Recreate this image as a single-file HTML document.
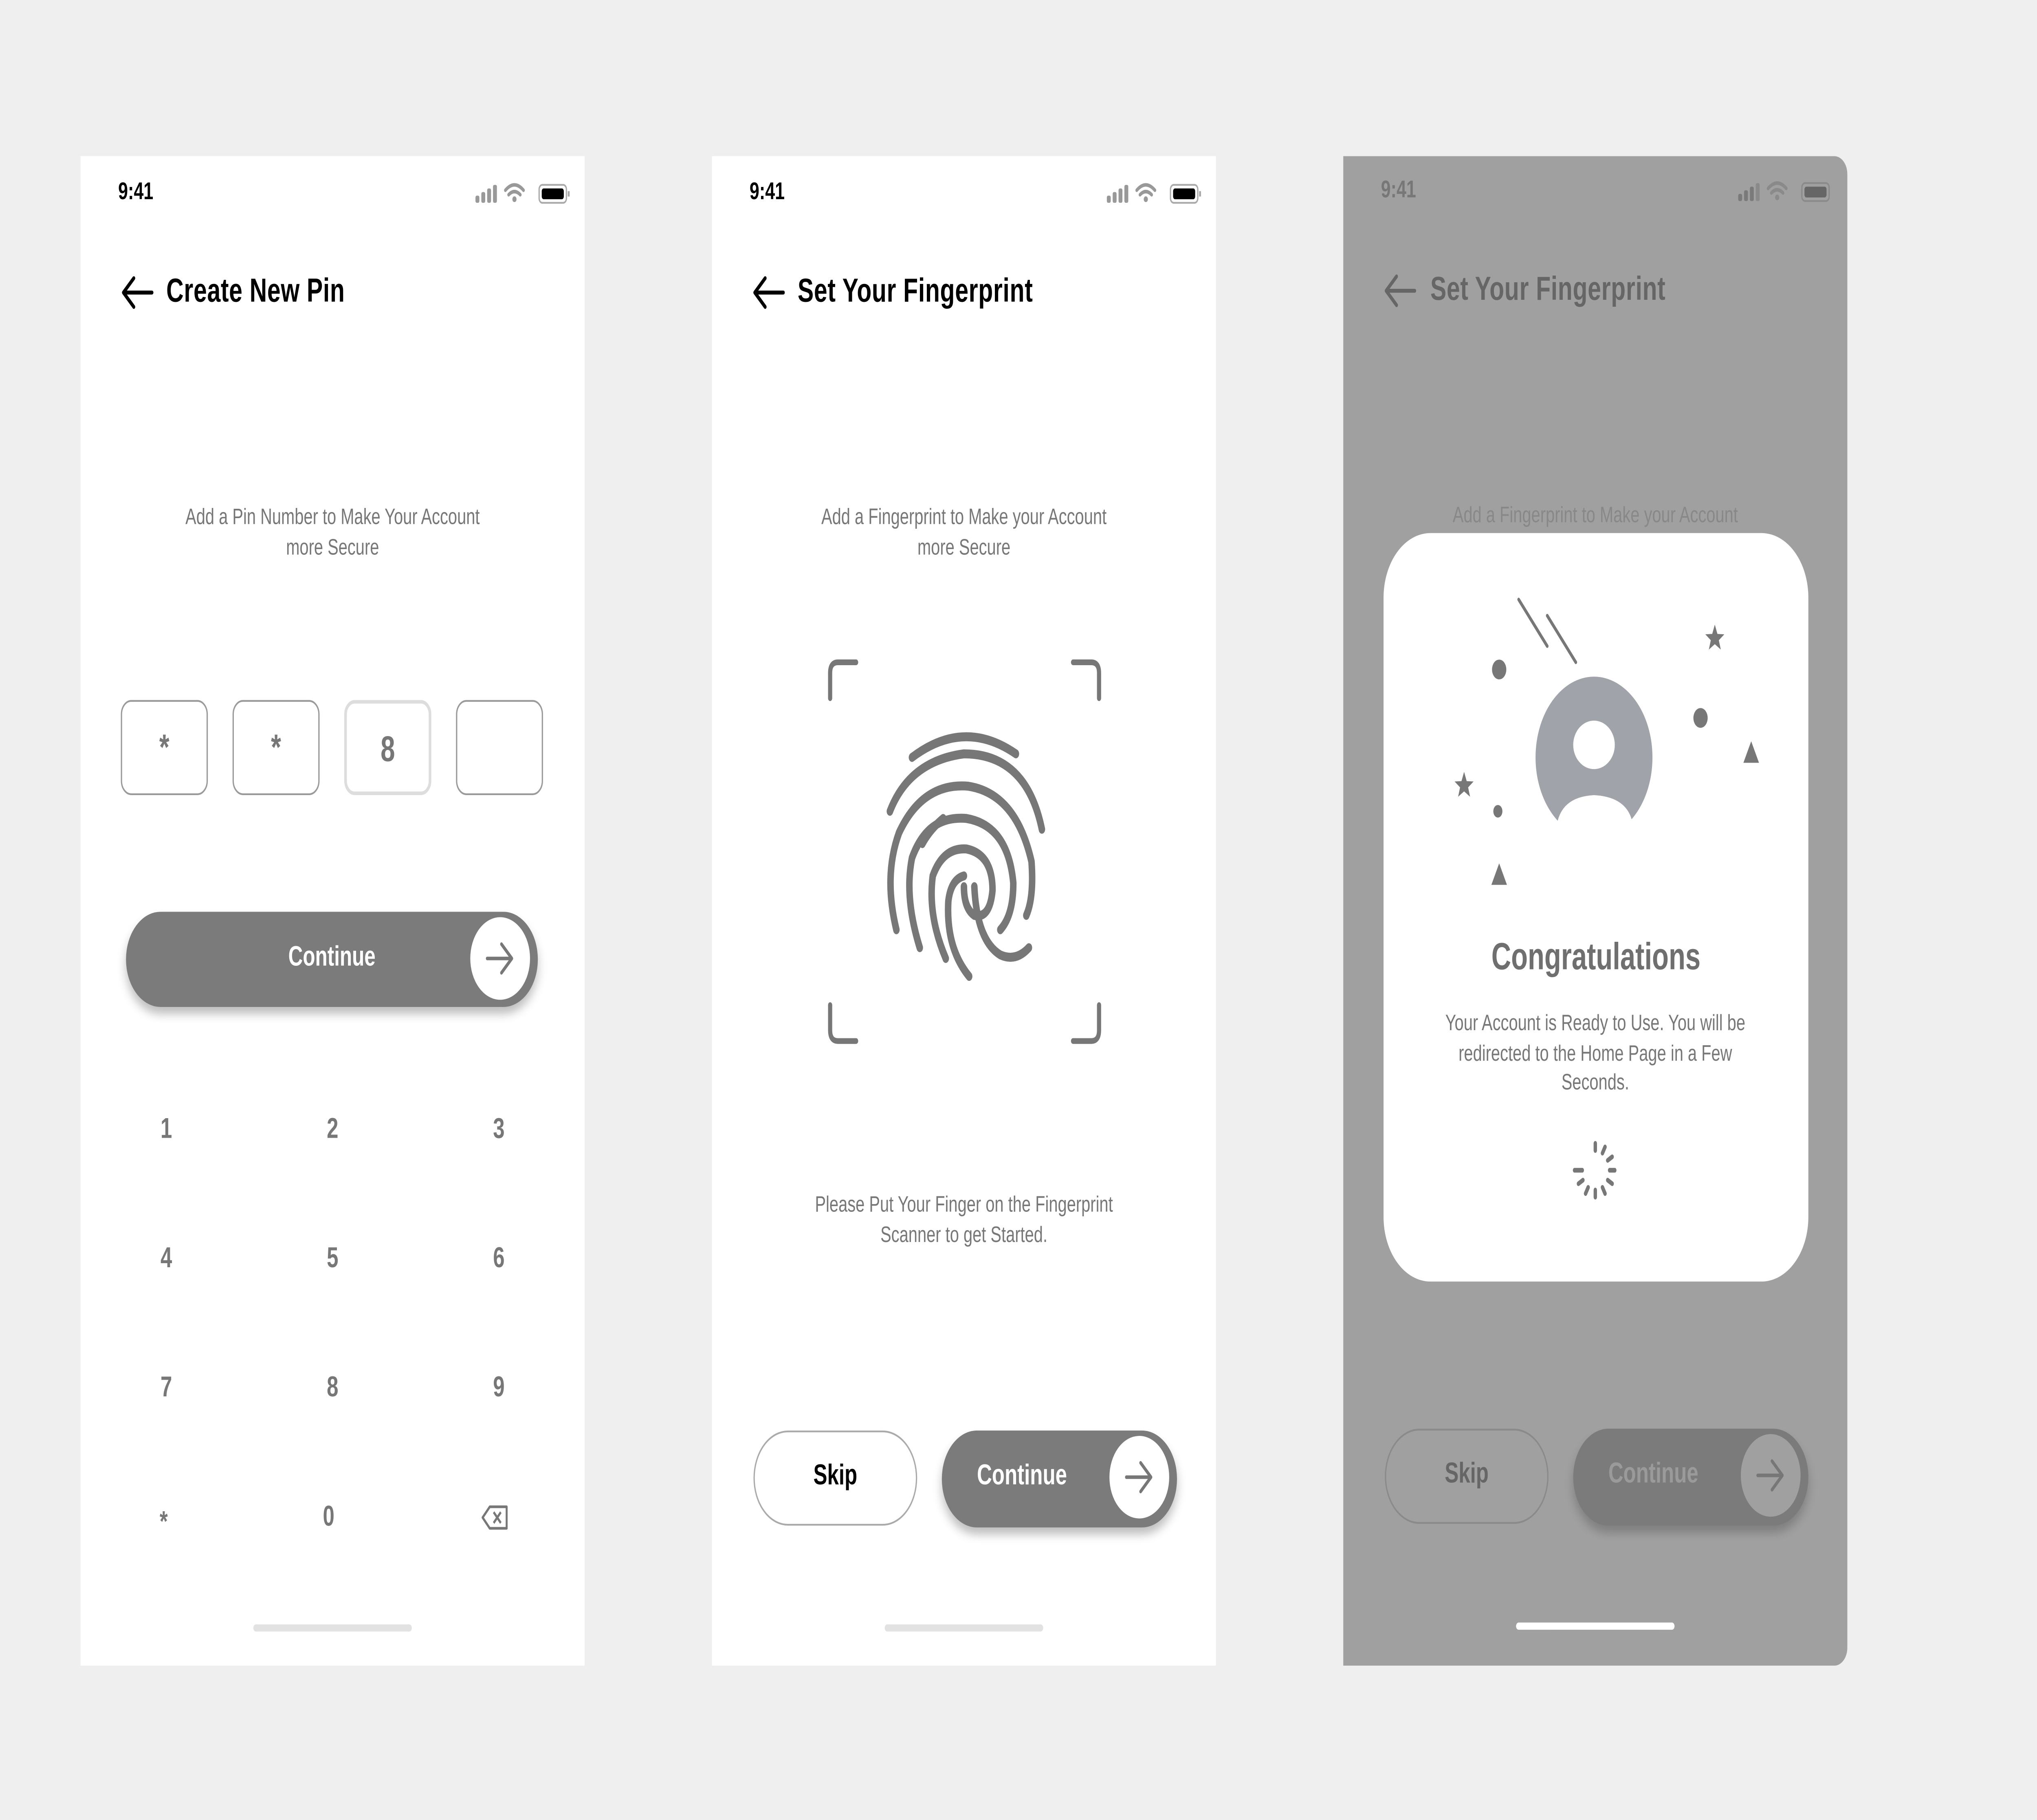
<!DOCTYPE html>
<html><head><meta charset="utf-8">
<style>
html,body{margin:0;padding:0;background:#efefef;overflow:hidden;width:100%;height:100%}
#wrap{position:fixed;left:0;top:0;width:100vw;height:100vh;display:block}
#s{position:relative;width:1568px;height:1014px;font-family:"Liberation Sans",sans-serif;background:#efefef;overflow:hidden}
.ph{position:absolute;top:87px;width:388px;height:841px;background:#fff;overflow:hidden}
.a{position:absolute}
.t{position:absolute;white-space:nowrap}
.time{font-size:13.5px;font-weight:bold;top:99px}
.title{font-size:18.5px;font-weight:bold;top:151px;letter-spacing:.2px}
.sub{font-size:12.5px;color:#777;text-align:center;line-height:16.5px;width:300px}
.box{position:absolute;width:65px;height:51px;border:1.3px solid #9a9a9a;border-radius:8px;top:390px;text-align:center;font-size:20px;font-weight:bold;color:#777;line-height:53px;background:#fff}
.key{position:absolute;font-size:16px;font-weight:bold;color:#777;width:40px;text-align:center;margin-left:-20px}
.home{position:absolute;top:905px;width:122px;height:4px;border-radius:2px;background:#e2e2e2}
</style></head><body>
<svg id="wrap" viewBox="0 0 1568 1014" preserveAspectRatio="none" xmlns="http://www.w3.org/2000/svg">
<foreignObject x="0" y="0" width="1568" height="1014">
<div xmlns="http://www.w3.org/1999/xhtml" id="s">

<!-- PHONE 1 -->
<div class="ph" style="left:62px"></div>
<div class="t time" style="left:91px">9:41</div>
<svg class="a" style="left:364px;top:100px" width="76" height="16" viewBox="0 0 76 16">
<rect x="2" y="9" width="3" height="4" rx="1" fill="#999"/><rect x="6.5" y="7" width="3" height="6" rx="1" fill="#999"/><rect x="11" y="5" width="3" height="8" rx="1" fill="#999"/><rect x="15.5" y="3" width="3" height="10" rx="1" fill="#999"/>
<path d="M25 6 Q32 0 39 6 M27.5 8.5 Q32 5 36.5 8.5" stroke="#999" stroke-width="2" fill="none" stroke-linecap="round"/><circle cx="32" cy="11" r="1.6" fill="#999"/>
<rect x="51" y="3" width="21" height="10" rx="2.5" fill="none" stroke="#aaa" stroke-width="1"/><rect x="53" y="5" width="17" height="6" rx="1.5" fill="#000"/><rect x="73" y="6.5" width="1.5" height="3" fill="#aaa"/></svg>
<svg class="a" style="left:92px;top:153px" width="28" height="20" viewBox="0 0 28 20"><path d="M25 10H3 M11 2L3 10L11 18" stroke="#000" stroke-width="2.2" fill="none" stroke-linecap="round" stroke-linejoin="round"/></svg>
<div class="t title" style="left:128px">Create New Pin</div>
<div class="t sub" style="left:106px;top:280px">Add a Pin Number to Make Your Account<br/>more Secure</div>
<div class="box" style="left:93px">*</div>
<div class="box" style="left:179px">*</div>
<div class="box" style="left:265px;border-color:#ddd;border-width:2px;width:63px;height:49px">8</div>
<div class="box" style="left:351px"></div>
<div class="a" style="left:97px;top:508px;width:317px;height:53px;border-radius:27px;background:#7b7b7b;box-shadow:0 4px 6px rgba(0,0,0,.25)"></div>
<div class="t" style="left:97px;width:317px;text-align:center;top:525px;color:#fff;font-size:15.5px;font-weight:bold">Continue</div>
<div class="a" style="left:362px;top:511px;width:46px;height:46px;border-radius:50%;background:#fff"></div>
<svg class="a" style="left:373px;top:524px" width="24" height="20" viewBox="0 0 24 20"><path d="M2 10H21 M13 2L21 10L13 18" stroke="#777" stroke-width="2" fill="none" stroke-linecap="round" stroke-linejoin="round"/></svg>
<div class="key" style="left:128px;top:621px">1</div><div class="key" style="left:256px;top:621px">2</div><div class="key" style="left:384px;top:621px">3</div>
<div class="key" style="left:128px;top:693px">4</div><div class="key" style="left:256px;top:693px">5</div><div class="key" style="left:384px;top:693px">6</div>
<div class="key" style="left:128px;top:765px">7</div><div class="key" style="left:256px;top:765px">8</div><div class="key" style="left:384px;top:765px">9</div>
<div class="key" style="left:126px;top:840px">*</div><div class="key" style="left:253px;top:837px">0</div>
<svg class="a" style="left:370px;top:838px" width="22" height="15" viewBox="0 0 22 15"><path d="M7 1.5H20V13.5H7L1.5 7.5Z" stroke="#777" stroke-width="1.5" fill="none" stroke-linejoin="round"/><path d="M10 4.5L15.5 10.5M15.5 4.5L10 10.5" stroke="#777" stroke-width="1.5"/></svg>
<div class="home" style="left:195px"></div>

<!-- PHONE 2 -->
<div class="ph" style="left:548px"></div>
<div class="t time" style="left:577px">9:41</div>
<svg class="a" style="left:850px;top:100px" width="76" height="16" viewBox="0 0 76 16">
<rect x="2" y="9" width="3" height="4" rx="1" fill="#999"/><rect x="6.5" y="7" width="3" height="6" rx="1" fill="#999"/><rect x="11" y="5" width="3" height="8" rx="1" fill="#999"/><rect x="15.5" y="3" width="3" height="10" rx="1" fill="#999"/>
<path d="M25 6 Q32 0 39 6 M27.5 8.5 Q32 5 36.5 8.5" stroke="#999" stroke-width="2" fill="none" stroke-linecap="round"/><circle cx="32" cy="11" r="1.6" fill="#999"/>
<rect x="51" y="3" width="21" height="10" rx="2.5" fill="none" stroke="#aaa" stroke-width="1"/><rect x="53" y="5" width="17" height="6" rx="1.5" fill="#000"/><rect x="73" y="6.5" width="1.5" height="3" fill="#aaa"/></svg>
<svg class="a" style="left:578px;top:153px" width="28" height="20" viewBox="0 0 28 20"><path d="M25 10H3 M11 2L3 10L11 18" stroke="#000" stroke-width="2.2" fill="none" stroke-linecap="round" stroke-linejoin="round"/></svg>
<div class="t title" style="left:614px">Set Your Fingerprint</div>
<div class="t sub" style="left:592px;top:280px">Add a Fingerprint to Make your Account<br/>more Secure</div>
<svg class="a" style="left:630px;top:360px" width="225" height="230" viewBox="0 0 225 230">
<g stroke="#777" stroke-width="3.2" fill="none" stroke-linecap="round">
<path d="M9 29V15Q9 9 15 9H29"/><path d="M196 9H210Q216 9 216 15V29"/><path d="M9 200V214Q9 220 15 220H29"/><path d="M216 200V214Q216 220 210 220H196"/>
</g>
<g stroke="#777" stroke-width="5" fill="none" stroke-linecap="round">
<path d="M72 62Q112 40 152 60"/>
<path d="M55 92Q70 64 112 60Q160 60 172 102"/>
<path d="M60 158Q50 128 62 104Q80 76 115 78Q152 82 164 120Q166 140 160 150"/>
<path d="M78 168Q66 140 72 118Q84 94 114 96Q146 100 150 132Q150 150 140 158"/>
<path d="M98 174Q84 150 88 128Q96 112 114 113Q134 116 134 136Q132 152 120 150Q112 146 112 134"/>
<path d="M116 184Q98 168 100 142Q102 130 112 128"/>
<path d="M120 134Q122 164 140 172Q152 176 162 168"/>
<path d="M96 96Q86 102 80 110"/>
</g></svg>
<div class="t sub" style="left:592px;top:663px">Please Put Your Finger on the Fingerprint<br/>Scanner to get Started.</div>
<div class="a" style="left:580px;top:797px;width:124px;height:51px;border:1.5px solid #aaa;border-radius:27px;background:#fff"></div>
<div class="t" style="left:580px;width:126px;text-align:center;top:814px;font-size:16px;font-weight:bold;color:#000">Skip</div>
<div class="a" style="left:725px;top:797px;width:181px;height:54px;border-radius:27px;background:#7b7b7b;box-shadow:0 4px 6px rgba(0,0,0,.25)"></div>
<div class="t" style="left:752px;top:814px;color:#fff;font-size:16px;font-weight:bold">Continue</div>
<div class="a" style="left:854px;top:800px;width:46px;height:46px;border-radius:50%;background:#fff"></div>
<svg class="a" style="left:865px;top:813px" width="24" height="20" viewBox="0 0 24 20"><path d="M2 10H21 M13 2L21 10L13 18" stroke="#777" stroke-width="2" fill="none" stroke-linecap="round" stroke-linejoin="round"/></svg>
<div class="home" style="left:681px"></div>

<!-- PHONE 3 -->
<div class="ph" style="left:1034px;background:#a0a0a0;border-radius:0 10px 10px 0"></div>
<div class="t time" style="left:1063px;color:#777;top:98px">9:41</div>
<svg class="a" style="left:1336px;top:99px" width="76" height="16" viewBox="0 0 76 16">
<rect x="2" y="9" width="3" height="4" rx="1" fill="#7a7a7a"/><rect x="6.5" y="7" width="3" height="6" rx="1" fill="#7a7a7a"/><rect x="11" y="5" width="3" height="8" rx="1" fill="#7a7a7a"/><rect x="15.5" y="3" width="3" height="10" rx="1" fill="#8a8a8a"/>
<path d="M25 6 Q32 0 39 6 M27.5 8.5 Q32 5 36.5 8.5" stroke="#8a8a8a" stroke-width="2" fill="none" stroke-linecap="round"/><circle cx="32" cy="11" r="1.6" fill="#8a8a8a"/>
<rect x="51" y="3" width="21" height="10" rx="2.5" fill="none" stroke="#8a8a8a" stroke-width="1"/><rect x="53" y="5" width="17" height="6" rx="1.5" fill="#666"/></svg>
<svg class="a" style="left:1064px;top:152px" width="28" height="20" viewBox="0 0 28 20"><path d="M25 10H3 M11 2L3 10L11 18" stroke="#666" stroke-width="2.2" fill="none" stroke-linecap="round" stroke-linejoin="round"/></svg>
<div class="t title" style="left:1101px;top:150px;color:#666">Set Your Fingerprint</div>
<div class="t sub" style="left:1078px;top:279px;color:#888">Add a Fingerprint to Make your Account</div>
<div class="a" style="left:1066px;top:796px;width:124px;height:51px;border:1.5px solid #8a8a8a;border-radius:27px"></div>
<div class="t" style="left:1066px;width:126px;text-align:center;top:813px;font-size:16px;font-weight:bold;color:#666">Skip</div>
<div class="a" style="left:1211px;top:796px;width:181px;height:54px;border-radius:27px;background:#7b7b7b;box-shadow:0 4px 6px rgba(0,0,0,.2)"></div>
<div class="t" style="left:1238px;top:813px;color:#9a9a9a;font-size:16px;font-weight:bold">Continue</div>
<div class="a" style="left:1340px;top:799px;width:46px;height:46px;border-radius:50%;background:#a0a0a0"></div>
<svg class="a" style="left:1351px;top:812px" width="24" height="20" viewBox="0 0 24 20"><path d="M2 10H21 M13 2L21 10L13 18" stroke="#777" stroke-width="2" fill="none" stroke-linecap="round" stroke-linejoin="round"/></svg>
<div class="home" style="left:1167px;top:904px;background:#fff"></div>

<div class="a" style="left:1065px;top:297px;width:327px;height:417px;border-radius:36px;background:#fff"></div>
<svg class="a" style="left:1065px;top:297px" width="327" height="250" viewBox="0 0 327 250">
<g stroke="#777" stroke-width="2" stroke-linecap="round"><line x1="104" y1="37" x2="126" y2="63"/><line x1="126" y1="46" x2="148" y2="72"/></g>
<circle cx="89" cy="76" r="5.5" fill="#777"/><circle cx="244" cy="103" r="5.5" fill="#777"/><circle cx="88" cy="155" r="3.5" fill="#777"/>
<circle cx="162" cy="125" r="45" fill="#a0a3aa"/>
<ellipse cx="162" cy="118" rx="16" ry="13.5" fill="#fff"/>
<path d="M133 165 Q135 147 162 146 Q189 147 192 163 Q178 171 162 171 Q145 171 133 165Z" fill="#fff"/>
<polygon points="89,184 95,196 83,196" fill="#777"/><polygon points="283,116 289,128 277,128" fill="#777"/>
<path d="M255 51l2 5.2 5.3.2-4.2 3.3 1.5 5.2-4.6-3-4.6 3 1.5-5.2-4.2-3.3 5.3-.2z" fill="#777"/>
<path d="M62 133l2 5.2 5.3.2-4.2 3.3 1.5 5.2-4.6-3-4.6 3 1.5-5.2-4.2-3.3 5.3-.2z" fill="#777"/>
</svg>
<div class="t" style="left:1065px;width:327px;text-align:center;top:522px;font-size:21px;font-weight:bold;color:#6f6f6f">Congratulations</div>
<div class="t sub" style="left:1078px;top:562px;color:#777">Your Account is Ready to Use. You will be<br/>redirected to the Home Page in a Few<br/>Seconds.</div>
<svg class="a" style="left:1208px;top:632px" width="40" height="40" viewBox="-20 -20 40 40">
<g stroke="#777" stroke-width="2.6" stroke-linecap="round">
<line x1="0" y1="-15" x2="0" y2="-11" transform="rotate(0)"/>
<line x1="0" y1="-15" x2="0" y2="-11" transform="rotate(30)"/>
<line x1="0" y1="-15" x2="0" y2="-11" transform="rotate(60)"/>
<line x1="0" y1="-15" x2="0" y2="-11" transform="rotate(90)"/>
<line x1="0" y1="-15" x2="0" y2="-11" transform="rotate(120)"/>
<line x1="0" y1="-15" x2="0" y2="-11" transform="rotate(150)"/>
<line x1="0" y1="-15" x2="0" y2="-11" transform="rotate(180)"/>
<line x1="0" y1="-15" x2="0" y2="-11" transform="rotate(210)"/>
<line x1="0" y1="-15" x2="0" y2="-11" transform="rotate(240)"/>
<line x1="0" y1="-16" x2="0" y2="-10" transform="rotate(270)"/>
</g></svg>

</div>
</foreignObject>
</svg>
</body></html>
